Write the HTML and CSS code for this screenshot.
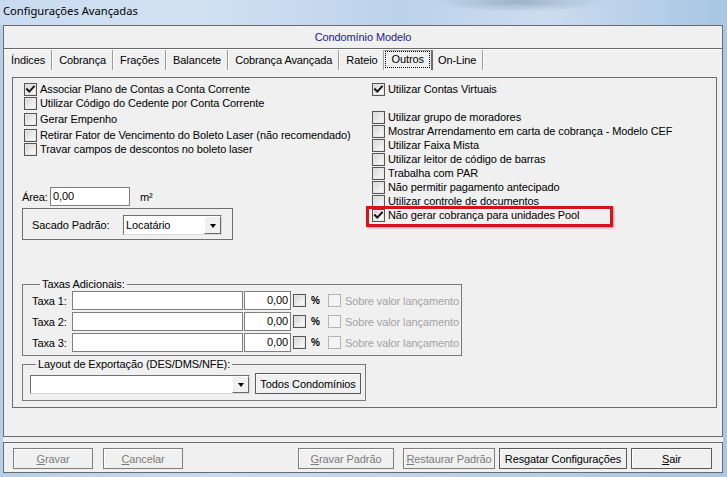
FILE: index.html
```html
<!DOCTYPE html>
<html lang="pt-BR">
<head>
<meta charset="utf-8">
<title>Configurações Avançadas</title>
<link rel="stylesheet" href="styles.css">
</head>
<body>
<div class="titlebar">Configurações Avançadas</div>
<div class="client">
  <div class="frame">
    <div class="header">Condomínio Modelo</div>
    <div class="tabs">
      <span class="tab">Índices</span>
      <span class="tab">Cobrança</span>
      <span class="tab">Frações</span>
      <span class="tab">Balancete</span>
      <span class="tab">Cobrança Avançada</span>
      <span class="tab before-active">Rateio</span>
      <span class="tab active"><span class="focus">Outros</span></span>
      <span class="tab">On-Line</span>
    </div>
    <div class="panel">
      <div class="col-left">
        <div class="chk"><span class="cb checked"><svg viewBox="0 0 11 11"><path d="M2 5.2l2.3 2.4 4.6-5"/></svg></span>Associar Plano de Contas a Conta Corrente</div>
        <div class="chk"><span class="cb"></span>Utilizar Código do Cedente por Conta Corrente</div>
        <div class="chk gap2"><span class="cb"></span>Gerar Empenho</div>
        <div class="chk gap2"><span class="cb"></span>Retirar Fator de Vencimento do Boleto Laser (não recomendado)</div>
        <div class="chk"><span class="cb"></span>Travar campos de descontos no boleto laser</div>

        <div class="area-row">
          <span class="area-label">Área:</span>
          <span class="input area-input">0,00</span>
          <span class="unit">m²</span>
        </div>

        <div class="sacado">
          <span class="sacado-label">Sacado Padrão:</span>
          <span class="combo sacado-combo"><span class="combo-text">Locatário</span><span class="dd"><span class="arrow"></span></span></span>
        </div>

        <fieldset class="group taxas">
          <legend>Taxas Adicionais:</legend>
          <div class="taxa-row">
            <span class="taxa-label">Taxa 1:</span>
            <span class="input taxa-input"></span>
            <span class="input taxa-val">0,00</span>
            <span class="cb"></span>
            <span class="pct">%</span>
            <span class="cb disabled"></span>
            <span class="sobre">Sobre valor lançamento</span>
          </div>
          <div class="taxa-row">
            <span class="taxa-label">Taxa 2:</span>
            <span class="input taxa-input"></span>
            <span class="input taxa-val">0,00</span>
            <span class="cb"></span>
            <span class="pct">%</span>
            <span class="cb disabled"></span>
            <span class="sobre">Sobre valor lançamento</span>
          </div>
          <div class="taxa-row">
            <span class="taxa-label">Taxa 3:</span>
            <span class="input taxa-input"></span>
            <span class="input taxa-val">0,00</span>
            <span class="cb"></span>
            <span class="pct">%</span>
            <span class="cb disabled"></span>
            <span class="sobre">Sobre valor lançamento</span>
          </div>
        </fieldset>

        <fieldset class="group layout">
          <legend>Layout de Exportação (DES/DMS/NFE):</legend>
          <div class="layout-row">
            <span class="combo layout-combo"><span class="combo-text"></span><span class="dd"><span class="arrow"></span></span></span>
            <span class="btn todos">Todos Condomínios</span>
          </div>
        </fieldset>
      </div>

      <div class="col-right">
        <div class="chk"><span class="cb checked"><svg viewBox="0 0 11 11"><path d="M2 5.2l2.3 2.4 4.6-5"/></svg></span>Utilizar Contas Virtuais</div>
        <div class="chk gap14"><span class="cb"></span>Utilizar grupo de moradores</div>
        <div class="chk"><span class="cb"></span>Mostrar Arrendamento em carta de cobrança - Modelo CEF</div>
        <div class="chk"><span class="cb"></span>Utilizar Faixa Mista</div>
        <div class="chk"><span class="cb"></span>Utilizar leitor de código de barras</div>
        <div class="chk"><span class="cb"></span>Trabalha com PAR</div>
        <div class="chk"><span class="cb"></span>Não permitir pagamento antecipado</div>
        <div class="chk"><span class="cb"></span>Utilizar controle de documentos</div>
        <div class="chk highlighted"><span class="cb checked"><svg viewBox="0 0 11 11"><path d="M2 5.2l2.3 2.4 4.6-5"/></svg></span>Não gerar cobrança para unidades Pool<span class="redbox"></span></div>
      </div>
    </div>
  </div>

  <div class="bar">
    <span class="btn off b-gravar"><u>G</u>ravar</span>
    <span class="btn off b-cancelar"><u>C</u>ancelar</span>
    <span class="btn off b-gpadrao"><u>G</u>ravar Padrão</span>
    <span class="btn off b-rpadrao"><u>R</u>estaurar Padrão</span>
    <span class="btn b-resgatar">Resgatar Configurações</span>
    <span class="btn b-sair"><u>S</u>air</span>
  </div>
</div>
</body>
</html>
```

FILE: styles.css
```css
* { box-sizing: border-box; }

html, body {
  margin: 0;
  padding: 0;
}

body {
  width: 727px;
  height: 477px;
  overflow: hidden;
  background: linear-gradient(90deg, #b7cfe9 0%, #c9dbef 30%, #bcd2ea 60%, #a9c6e4 100%);
  font-family: "Liberation Sans", Arial, sans-serif;
  font-size: 11px;
  letter-spacing: -0.1px;
  color: #000;
}

.titlebar {
  height: 25px;
  padding-left: 3px;
  line-height: 22px;
  font-family: "Noto Sans", "Open Sans", sans-serif;
  font-size: 11.2px;
  letter-spacing: 0;
  color: #000;
  background:
    radial-gradient(ellipse 120px 14px at 520px 2px, rgba(70, 100, 130, 0.35), rgba(70, 100, 130, 0) 70%),
    linear-gradient(90deg, #c8dbf0 0%, #d3e2f3 25%, #bcd2eb 55%, #cbdcef 75%, #a8c5e4 100%);
}

.client {
  margin-left: 3px;
  width: 720px;
  height: 448px;
  background: #f0f0f0;
}

/* main frame holding header, tabs and panel */
.frame {
  height: 412px;
  border: 1px solid #6b6b6b;
  display: flex;
  flex-direction: column;
}

.header {
  height: 23px;
  border-bottom: 1px solid #6b6b6b;
  box-shadow: 0 1px 0 #ffffff;
  text-align: center;
  line-height: 22px;
  color: #20208a;
}

.tabs {
  display: flex;
  height: 22px;
  padding-left: 0;
  padding-top: 1px;
}

.tab {
  height: 20px;
  line-height: 20px;
  padding: 0 6px 0 7px;
  border-right: 1px solid #9a9a9a;
  box-shadow: 1px 0 0 #ffffff;
  white-space: nowrap;
}

.tab.before-active {
  border-right: none;
  box-shadow: none;
  padding-right: 4px;
}

.tab.active {
  padding: 0 1px;
  margin-left: 1px;
  border-top: 1px solid #a0a0a0;
  border-left: 1px solid #a0a0a0;
  border-right: 2px solid #6a6a6a;
  box-shadow: none;
  height: 20px;
  line-height: 17px;
}

.tab.active .focus {
  display: block;
  height: 17px;
  padding: 0 6px 0 7px;
  outline: 1px dotted #000;
  outline-offset: -1px;
}

.tab.active + .tab {
  padding-left: 5px;
}

.panel {
  margin: 6px 5px 0 8px;
  height: 331px;
  border: 1px solid #6b6b6b;
  display: flex;
}

.col-left {
  width: 359px;
  padding: 4px 0 0 9px;
}

.col-right {
  flex: 1;
  padding-top: 4px;
}

/* checkbox rows */
.chk {
  display: flex;
  align-items: center;
  height: 14px;
  line-height: 14px;
  white-space: nowrap;
}

.col-left .chk {
  padding-left: 2px;
}

.chk.gap2 { margin-top: 2px; }
.chk.gap14 { margin-top: 14px; }

.cb {
  display: inline-block;
  flex: none;
  width: 13px;
  height: 13px;
  border: 1px solid #555;
  background: linear-gradient(135deg, #d2d2d2 0%, #eeeeee 60%, #fbfbfb 100%);
  box-shadow: inset 0 0 0 1px #e6e6e6;
  position: relative;
}

.chk .cb {
  margin-right: 3px;
}

.cb svg {
  display: block;
  width: 11px;
  height: 11px;
}

.cb svg path {
  fill: none;
  stroke: #151515;
  stroke-width: 2;
  stroke-linecap: square;
}

.cb.disabled {
  border-color: #b4b4b4;
  background: #f4f4f4;
  box-shadow: none;
}

.highlighted {
  position: relative;
}

.redbox {
  position: absolute;
  left: -6px;
  top: -2px;
  width: 247px;
  height: 21px;
  border: 3px solid #d6131c;
  box-shadow: 1px 1px 2px rgba(0, 0, 0, 0.35);
  pointer-events: none;
}

/* inputs */
.input {
  display: inline-block;
  height: 19px;
  line-height: 17px;
  border: 1px solid #7e7e7e;
  background: #fff;
  padding: 0 2px;
  white-space: nowrap;
}

.area-row {
  display: flex;
  align-items: center;
  margin-top: 31px;
  height: 19px;
}

.area-label {
  width: 28px;
}

.area-input {
  width: 80px;
}

.unit {
  margin-left: 10px;
}

.sacado {
  margin-top: 2px;
  width: 211px;
  height: 32px;
  border: 1px solid #6e6e6e;
  display: flex;
  align-items: flex-start;
  padding: 6px 0 0 9px;
}

.sacado-label {
  width: 91px;
  line-height: 20px;
}

.combo {
  display: flex;
  height: 20px;
  background: #fff;
  border: 1px solid;
  border-color: #6f6f6f #d8d8d8 #d8d8d8 #6f6f6f;
}

.combo-text {
  flex: 1;
  line-height: 18px;
  padding-left: 2px;
}

.dd {
  width: 17px;
  height: 18px;
  background: #f0f0f0;
  border: 1px solid;
  border-color: #ffffff #6a6a6a #6a6a6a #ffffff;
  display: flex;
  align-items: center;
  justify-content: center;
}

.arrow {
  width: 0;
  height: 0;
  border-left: 3.5px solid transparent;
  border-right: 3.5px solid transparent;
  border-top: 4px solid #000;
  margin-top: 1px;
}

.sacado-combo {
  width: 99px;
}

/* group boxes */
.group {
  margin: 0;
  padding: 0;
  border: 1px solid #7a7a7a;
  min-width: 0;
}

.group legend {
  padding: 0 2px;
  line-height: 13px;
}

.taxas {
  width: 440px;
  margin-top: 38px;
  padding: 0 0 3px 9px;
}

.taxas legend {
  margin-left: 8px;
}

.taxa-row {
  display: flex;
  align-items: center;
  height: 19px;
  margin-top: 2px;
}

.taxa-row:first-of-type {
  margin-top: 0;
}

.taxa-label {
  width: 40px;
}

.taxa-input {
  width: 171px;
}

.taxa-val {
  width: 47px;
  margin-left: 1px;
  text-align: right;
}

.taxa-row .cb {
  margin-left: 2px;
}

.pct {
  margin-left: 5px;
  width: 14px;
  font-weight: bold;
  font-size: 10px;
}

.taxa-row .cb.disabled {
  margin-left: 3px;
}

.sobre {
  margin-left: 4px;
  color: #a3a3a3;
  white-space: nowrap;
}

.layout {
  width: 344px;
  margin-top: 2px;
  padding: 2px 0 6px 7px;
}

.layout legend {
  margin-left: 6px;
}

.layout-row {
  display: flex;
  align-items: flex-end;
}

.layout-combo {
  width: 220px;
  height: 19px;
}

.layout-combo .dd {
  height: 17px;
}

/* buttons */
.btn {
  display: inline-flex;
  align-items: center;
  justify-content: center;
  height: 21px;
  border: 1px solid #5a5a5a;
  background: #f0f0f0;
  box-shadow: inset 1px 1px 0 #ffffff;
  white-space: nowrap;
}

.btn.off {
  color: #7c7c7c;
  border-color: #7e7e7e;
}

.todos {
  width: 106px;
  margin-left: 5px;
}

.bar {
  margin-top: 5px;
  height: 31px;
  border: 1px solid #6b6b6b;
  display: flex;
  align-items: flex-start;
  padding-top: 5px;
}

.b-gravar { width: 80px; margin-left: 9px; }
.b-cancelar { width: 80px; margin-left: 10px; }
.b-gpadrao { width: 96px; margin-left: 115px; }
.b-rpadrao { width: 92px; margin-left: 9px; }
.b-resgatar { width: 128px; margin-left: 4px; }
.b-sair { width: 81px; margin-left: 4px; }
```
